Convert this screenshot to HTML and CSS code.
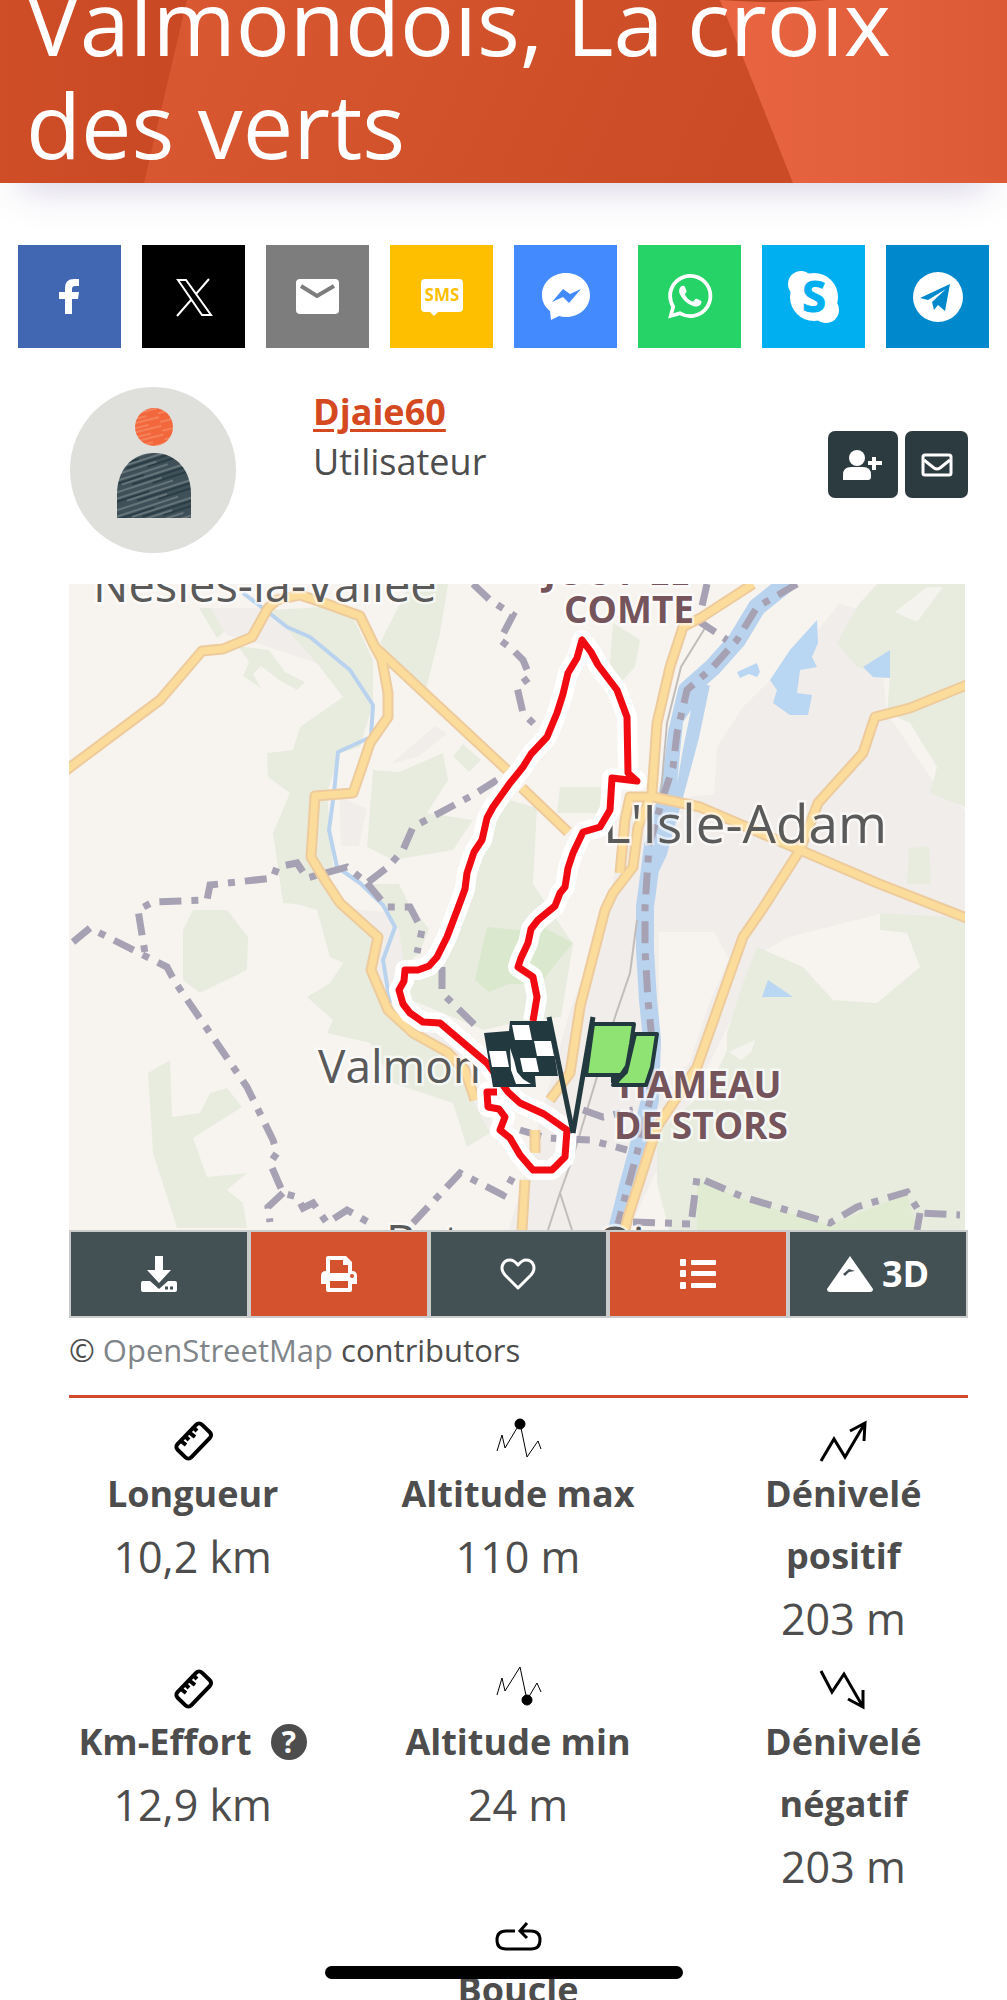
FILE: index.html
```html
<!DOCTYPE html>
<html lang="fr">
<head>
  <meta charset="UTF-8" />
  <meta name="viewport" content="width=device-width, initial-scale=1.0"/>
  <title>Valmondois, La croix des verts</title>
  <link rel="stylesheet" href="styles.css">
</head>
<body>

  <header class="hero">
    <svg class="hero-bg" viewBox="0 0 1007 213" preserveAspectRatio="none" aria-hidden="true">
      <defs>
        <linearGradient id="heroBase" x1="0" y1="0" x2="1" y2="0">
          <stop offset="0" stop-color="#cf4e28"/>
          <stop offset="0.16" stop-color="#c94924"/>
          <stop offset="1" stop-color="#cc4b25"/>
        </linearGradient>
        <linearGradient id="heroMid" x1="0" y1="0" x2="1" y2="0.15">
          <stop offset="0" stop-color="#da5932"/>
          <stop offset="1" stop-color="#ca4b25"/>
        </linearGradient>
        <linearGradient id="heroRight" x1="0" y1="0" x2="1" y2="0">
          <stop offset="0" stop-color="#ea6642"/>
          <stop offset="1" stop-color="#dd5a37"/>
        </linearGradient>
      </defs>
      <rect width="1007" height="213" fill="url(#heroBase)"/>
      <path d="M194 0L144 213H800L716 0Z" fill="url(#heroMid)"/>
      <path d="M708 0L793 213H1007V0Z" fill="url(#heroRight)"/>
      <path d="M640 20Q780 44 900 20Z" fill="#b9441f"/>
    </svg>
    <h1>Valmondois, La croix des verts</h1>
  </header>

  <nav class="share" aria-label="Partager">
    <a href="#" class="share-facebook" aria-label="Facebook">
      <svg viewBox="0 0 103 103"><path d="M47 69V54H41V47H47V43Q47 34 56 34H61V41H57Q54 41 54 44V47H61L60 54H54V69Z" fill="#fff"/></svg>
    </a>
    <a href="#" class="share-x" aria-label="X">
      <svg viewBox="0 0 103 103" fill="none" stroke="#fff" stroke-width="2"><path d="M36 35H44L69 70H60ZM67 34L54 49M49 55L35 71"/></svg>
    </a>
    <a href="#" class="share-mail" aria-label="E-mail">
      <svg viewBox="0 0 103 103"><rect x="30" y="34" width="43" height="35" rx="4" fill="#fff"/><path d="M35 41L51 51L68 41" fill="none" stroke="#7d7d7d" stroke-width="4"/></svg>
    </a>
    <a href="#" class="share-sms" aria-label="SMS">
      <svg viewBox="0 0 103 103"><path d="M35 34H69Q73 34 73 38V63Q73 67 69 67H48L44 71L40 67H35Q31 67 31 63V38Q31 34 35 34Z" fill="#fff"/><text x="52" y="56" class="sms-text">SMS</text></svg>
    </a>
    <a href="#" class="share-messenger" aria-label="Messenger">
      <svg viewBox="0 0 103 103"><path d="M52 28C38 28 28 38 28 50C28 57 31 62 36 66L37 75L45 71Q48 72 52 72C66 72 76 62 76 50C76 38 66 28 52 28Z" fill="#fff"/><path d="M38 57L49 44L56 49L67 44L55 58L49 52Z" fill="#448aff"/></svg>
    </a>
    <a href="#" class="share-whatsapp" aria-label="WhatsApp">
      <svg viewBox="0 0 103 103"><path transform="translate(30 29) scale(1.85)" fill="#fff" d="M17.472 14.382c-.297-.149-1.758-.867-2.03-.967-.273-.099-.471-.148-.67.15-.197.297-.767.966-.94 1.164-.173.199-.347.223-.644.075-.297-.15-1.255-.463-2.39-1.475-.883-.788-1.48-1.761-1.653-2.059-.173-.297-.018-.458.13-.606.134-.133.298-.347.446-.52.149-.174.198-.298.298-.497.099-.198.05-.371-.025-.52-.075-.149-.669-1.612-.916-2.207-.242-.579-.487-.5-.669-.51-.173-.008-.371-.01-.57-.01-.198 0-.52.074-.792.372-.272.297-1.04 1.016-1.04 2.479 0 1.462 1.065 2.875 1.213 3.074.149.198 2.096 3.2 5.077 4.487.709.306 1.262.489 1.694.625.712.227 1.36.195 1.871.118.571-.085 1.758-.719 2.006-1.413.248-.694.248-1.289.173-1.413-.074-.124-.272-.198-.57-.347m-5.421 7.403h-.004a9.87 9.87 0 01-5.031-1.378l-.361-.214-3.741.982.998-3.648-.235-.374a9.86 9.86 0 01-1.51-5.26c.001-5.45 4.436-9.884 9.888-9.884 2.64 0 5.122 1.03 6.988 2.898a9.825 9.825 0 012.893 6.994c-.003 5.45-4.437 9.884-9.885 9.884m8.413-18.297A11.815 11.815 0 0012.05 0C5.495 0 .16 5.335.157 11.892c0 2.096.547 4.142 1.588 5.945L.057 24l6.305-1.654a11.882 11.882 0 005.683 1.448h.005c6.554 0 11.89-5.335 11.893-11.893a11.821 11.821 0 00-3.48-8.413z"/></svg>
    </a>
    <a href="#" class="share-skype" aria-label="Skype">
      <svg viewBox="0 0 103 103"><g fill="#fff"><circle cx="52" cy="52" r="24"/><circle cx="39" cy="39" r="13"/><circle cx="64" cy="65" r="13"/></g><text x="52" y="67" class="skype-text">S</text></svg>
    </a>
    <a href="#" class="share-telegram" aria-label="Telegram">
      <svg viewBox="0 0 103 103"><circle cx="52" cy="52" r="25" fill="#fff"/><path d="M34 53L64 39L59 66L52 60L48 65L46 57L60 44L42 55Z" fill="#0088cc"/></svg>
    </a>
  </nav>

  <main>
    <section class="profile">
      <svg class="avatar" viewBox="0 0 167 167" role="img" aria-label="Avatar">
        <defs>
          <pattern id="hatchHead" width="40" height="9" patternUnits="userSpaceOnUse" patternTransform="rotate(-14)">
            <rect width="40" height="9" fill="#f2683c"/>
            <path d="M0 2H28M12 6H40" stroke="#f99a78" stroke-width="1"/>
          </pattern>
          <pattern id="hatchBody" width="90" height="17" patternUnits="userSpaceOnUse" patternTransform="rotate(-18)">
            <rect width="90" height="17" fill="#3f5058"/>
            <path d="M0 2H70M20 7H90M0 13H60" stroke="#8d999c" stroke-width="1"/>
            <path d="M30 10H90M0 5H44M50 15H90" stroke="#2a3c45" stroke-width="2"/>
          </pattern>
        </defs>
        <circle cx="84" cy="83" r="83" fill="#dfe0dc"/>
        <circle cx="85" cy="40" r="19" fill="url(#hatchHead)"/>
        <path d="M48 131V107C48 84 62 66 85 66C108 66 122 84 122 107V131Z" fill="url(#hatchBody)"/>
      </svg>
      <div class="profile-text">
        <a href="#" class="profile-name">Djaie60</a>
        <span>Utilisateur</span>
      </div>
      <div class="profile-actions">
        <button type="button" class="btn-follow" aria-label="Suivre">
          <svg width="40" height="34" viewBox="0 0 40 34" fill="#fff"><circle cx="14" cy="10" r="8"/><path d="M0 32V27Q0 19 8 19H20Q28 19 28 27V29Q28 32 25 32H3Q0 32 0 32Z"/><path d="M31 9V22M25 15H39" stroke="#fff" stroke-width="4"/></svg>
        </button>
        <button type="button" class="btn-message" aria-label="Envoyer un message">
          <svg width="32" height="24" viewBox="0 0 32 24" fill="none" stroke="#fff" stroke-width="3"><rect x="2" y="2" width="28" height="20" rx="2"/><path d="M3 7L13 15Q16 17 19 15L29 7"/></svg>
        </button>
      </div>
    </section>

    <svg class="map" viewBox="0 0 899 646" role="img" aria-label="Carte du parcours">
      <defs>
        <clipPath id="mapClip"><rect width="896" height="646"/></clipPath>
        <path id="roads" d="M-4 187L91 116L133 67L154 65L183 53L199 24L208 16L231 11L258 20L291 32L306 63L313 76L319 109V133L301 159L293 183L284 209L246 212L242 273L254 293L271 319L309 353L302 386L319 426L344 449L378 468L396 486L406 516M306 63L438 186M453 204L499 248M684 0L633 33L614 43L601 83L588 139L583 209L569 243L564 283L544 309L536 326L511 423L501 489L481 516M583 213L561 213L556 236L551 289M466 546V569M456 596L453 646M584 213L631 223L701 253L731 266L808 299L900 335M900 100L841 124L806 133L794 169L749 219L731 266L694 324L674 353L628 483L588 543L559 633L555 650"/>
        <path id="route" d="M464 437L468 413L464 393L449 383L452 374L459 359L462 345L469 336L486 322L491 309L496 303L499 284L504 269L514 248L531 243L541 226L543 194L568 197L559 189L558 133L548 106L529 81L522 68L513 56L508 74L499 89L494 110L488 129L478 153L462 170L454 183L441 199L424 223L418 234L413 256L405 268L398 289L396 305L389 324L378 353L368 373L360 382L349 386H336L335 397L330 406L334 420L341 429L354 438L371 439L391 456L418 479L439 508L451 519L475 530L498 546L496 573L483 586H464L451 571L441 554L431 546L436 533L430 525L419 523L418 508H428"/>
      </defs>
      <g clip-path="url(#mapClip)">
        <rect width="896" height="646" fill="#f7f4f0"/>

        <!-- towns -->
        <g fill="#f0edea">
          <path d="M648 163L674 123L741 56L770 20L808 30L818 129L868 203L896 226V334L811 330L720 353L690 370L660 440L600 560L560 646H440L500 430L540 320L556 230L600 215L645 210Z"/>
          <path d="M130 24H200L284 45L290 90L250 80L190 60L160 52Z"/>
          <path d="M258 140L268 170L258 206L228 190ZM270 212L298 225L290 262L272 262ZM322 180L366 142L378 150L350 172Z"/>
          <path d="M280 324L330 330L345 380L325 420L400 470L430 560L360 480L310 420Z"/>
        </g>
        <path d="M590 348H645L660 375L640 420L620 480L590 500Z" fill="#f7f4f0"/>

        <!-- woods -->
        <g fill="#e8ecdf">
          <path d="M201 26L254 23L284 33L304 76V119L291 163L271 169L258 209L264 283L244 289L274 324L214 319L204 249L221 209L199 193L198 169L224 166L231 143L274 113L251 83Z"/>
          <path d="M169 62L200 66L216 88L236 98L228 106L210 96L192 82L184 90L192 104L174 92L180 78Z"/>
          <path d="M130 24H142L155 48L148 54Z"/>
          <path d="M341 0H379L371 49L356 109L311 59Z"/>
          <path d="M304 186L330 188L374 169L379 196L358 229L404 236L384 266L324 276L298 263Z"/>
          <path d="M384 172L394 160L412 176L400 188Z"/>
          <path d="M441 216L468 224L464 300L484 330L504 360L492 433L440 440L415 446L340 415V392L372 380L395 330L405 290L425 240Z"/>
          <path d="M300 300L330 300L340 320L360 345L350 370L335 380L330 345Z"/>
          <path d="M114 346L124 326H158L179 353L178 386L131 409L114 396Z"/>
          <path d="M79 489L101 476L103 533L131 529L141 509L158 504L173 523L124 554L138 593L178 589L158 606L174 619L178 644H108L84 569Z"/>
          <path d="M214 316H264L304 356L298 389L321 429L378 469L421 549L398 563L384 519L324 499L301 459L258 449L264 436L238 413L261 399L274 379L261 373L248 326Z"/>
          <path d="M808 0H896V223L861 209L868 183L841 139L818 129L821 93L788 83L768 59L790 20Z"/>
          <path d="M688 363L734 383L764 416L808 419L851 383L838 349L811 346V329L896 334V646H600L588 599V549L641 503L658 466V449L674 399Z"/>
          <path d="M544 39L571 56L566 83L551 99L541 79Z"/>
          <path d="M491 203L538 203L528 229H488Z"/>
          <path d="M840 264L860 262L862 300L838 300Z"/>
        </g>
        <path d="M858 3H874L848 38L826 28Z" fill="#f5f3ee"/>
        <path d="M660 468L686 456L682 468L672 476Z" fill="#f5f3ee"/>
        <path d="M418 343L448 346L474 343L504 359L484 383L472 400H440L420 408L406 396Z" fill="#dae8ce"/>
        <path d="M628 596L674 615L761 641L838 610L848 646H628Z" fill="#e0ebd2"/>

        <!-- water -->
        <g fill="none" stroke="#b9d3ee" stroke-linejoin="round">
          <path d="M722 -4L688 23L668 56L644 83L618 106L608 149L604 183L598 213L584 262L576 323V366L579 416L583 456L581 516L568 569L558 606L547 650" stroke-width="18"/>
          <path d="M634 100L623 153L608 209L591 269L578 296" stroke-width="14"/>
          <path d="M174 9L199 28L218 43L241 53L281 86L304 121L302 153L269 168L265 209L260 246L268 283L291 299L314 321L326 343L314 376L321 419" stroke-width="4"/>
        </g>
        <path d="M614 138L622 126L614 165L608 200Z" fill="#f5f3ee"/>
        <g fill="#b9d6f2">
          <path d="M748 36L749 59L743 73L748 83L731 86L728 109L743 111L739 131H721L704 119L708 106L701 96L721 66Z"/>
          <path d="M668 88L688 79L691 88L688 93L680 90L671 94Z"/>
          <path d="M794 83L821 66V94L804 93Z"/>
          <path d="M699 396L724 413L693 413Z"/>
        </g>

        <!-- railways -->
        <path d="M636 44L612 83L598 139L592 209M568 336L561 389L546 433L521 516L504 573L491 609L479 646M491 609L503 646" class="rail"/>

        <!-- administrative boundaries -->
        <g class="boundary">
          <path d="M404 0L421 16L444 31L431 56L444 66L454 76L461 93L448 103L454 129L466 141"/>
          <path d="M428 196L404 211L344 243L334 266L319 283L298 299L278 283L238 294L228 279L208 283L204 294L141 301L138 316L84 318L69 326L76 369"/>
          <path d="M298 299L318 323L341 323L353 346L348 369M373 383V409L411 446"/>
          <path d="M4 358L21 344L74 371L98 383L106 398L178 503L204 556L208 569L201 579L214 609L228 613L234 624L244 619L258 639L278 626L304 641"/>
          <path d="M214 609L199 623L201 638"/>
          <path d="M344 639L391 589L434 611L446 589"/>
          <path d="M623 633L628 593L674 613L761 639L788 623L838 608L851 629L891 631M851 629L848 646"/>
          <path d="M564 638L621 640M451 546L478 554L521 556L558 566M514 526L534 533L564 526"/>
          <path d="M728 0L688 23L668 56L644 83L618 106L608 149L604 183L594 213L580 262L576 323V366L579 416L583 456L581 516L568 569L558 606L549 640"/>
          <path d="M628 36L658 56M638 0L633 22"/>
        </g>

        <use href="#roads" class="road-casing"/>
        <use href="#roads" class="road"/>

        <!-- place names -->
        <g class="place">
          <text x="24" y="18" font-size="47">Nesles-la-Vallée</text>
          <text x="534" y="259" font-size="53">L'Isle-Adam</text>
          <text x="249" y="499" font-size="46">Valmon</text>
          <text x="317" y="674" font-size="46">Butry</text>
          <text x="528" y="676" font-size="46">Oise</text>
        </g>
        <g class="hamlet">
          <text x="548" y="1">JOUY-LE</text>
          <text x="560" y="39">COMTE</text>
          <text x="631" y="514">HAMEAU</text>
          <text x="632" y="555">DE STORS</text>
        </g>

        <!-- hiking route -->
        <use href="#route" class="route-halo"/>
        <use href="#route" class="route"/>

        <!-- finish flag -->
        <path d="M480 433L504 549" stroke="#22393f" stroke-width="5"/>
        <path d="M415 449L440 447L441 437H480L489 492L466 492L467 503H424Z" fill="#22393f"/>
        <g fill="#fff">
          <path d="M443 441H460L463 456H446ZM465 457H482L485 472H468ZM451 474H467L470 488H454ZM420 467H437L440 483H423Z"/>
          <path d="M441 464L445 476L448 488L454 495L462 500H447L442 486Z"/>
        </g>
        <!-- start flag -->
        <path d="M524 433L504 549" stroke="#22393f" stroke-width="5"/>
        <path d="M566 450H588L583 483L577 501H544L557 488Z" fill="#8ee373" stroke="#22393f" stroke-width="4" stroke-linejoin="round"/>
        <path d="M556 488L549 500L542 499V492Z" fill="#22393f"/>
        <path d="M524 440H565L562 460L558 482L552 491H517Z" fill="#8ee373" stroke="#22393f" stroke-width="4" stroke-linejoin="round"/>
      </g>
    </svg>

    <div class="toolbar">
      <button type="button" aria-label="Télécharger">
        <svg width="36" height="36" viewBox="0 0 36 36" fill="#fff"><path d="M14 0H22V14H30L18 27L6 14H14Z"/><path d="M2 25H9L18 33L27 25H34Q36 25 36 27V34Q36 36 34 36H2Q0 36 0 34V27Q0 25 2 25Z"/><path d="M24 32H27M29 32H32" stroke="#435054" stroke-width="3"/></svg>
      </button>
      <button type="button" class="accent" aria-label="Imprimer">
        <svg width="36" height="36" viewBox="0 0 36 36"><path d="M7 0H25L31 6V15Q36 15 36 20V28H31V34Q31 36 29 36H7Q5 36 5 34V28H0V20Q0 15 5 15V2Q5 0 7 0Z" fill="#fff"/><path d="M9 4H22V9H27V17H9ZM9 25H27V32H9Z" fill="#d4522d"/><circle cx="31" cy="20" r="2" fill="#d4522d"/></svg>
      </button>
      <button type="button" aria-label="Favori">
        <svg width="36" height="34" viewBox="0 0 36 34" fill="none" stroke="#fff" stroke-width="3"><path d="M18 31L5 18C-1 11 3 3 10 3Q14 3 18 8Q22 3 26 3C33 3 37 11 31 18Z" stroke-linejoin="round"/></svg>
      </button>
      <button type="button" class="accent" aria-label="Liste">
        <svg width="36" height="32" viewBox="0 0 36 32" fill="#fff"><rect y="1" width="6" height="7" rx="1"/><rect y="12" width="6" height="7" rx="1"/><rect y="24" width="6" height="7" rx="1"/><rect x="11" y="2" width="25" height="5" rx="1"/><rect x="11" y="13" width="25" height="5" rx="1"/><rect x="11" y="25" width="25" height="5" rx="1"/></svg>
      </button>
      <button type="button">
        <svg width="46" height="36" viewBox="0 0 46 36"><path d="M23 0L46 33Q46 36 43 36H3Q0 36 0 33Z" fill="#fff"/><path d="M16 18L22 13L28 15L22 16L18 20Z" fill="#435054"/></svg>
        3D
      </button>
    </div>

    <p class="credit">© <a href="#">OpenStreetMap</a> contributors</p>
    <hr>
  </main>

  <section class="stats">
    <div class="stat">
      <svg width="48" height="48" viewBox="0 0 48 48" class="icon-bold"><rect x="7" y="17" width="35" height="19" rx="4" transform="rotate(-46 24 26)"/><path d="M12 26L17 30M17 22L20 25M21 18L26 22M25 13L28 16"/></svg>
      <h2>Longueur</h2>
      <p>10,2 km</p>
    </div>
    <div class="stat">
      <svg width="48" height="48" viewBox="0 0 48 48" class="icon-thin"><path d="M3 36L8 20L11 33L26 8L33 42L44 26L47 34"/><circle cx="26" cy="9" r="5"/></svg>
      <h2>Altitude max</h2>
      <p>110 m</p>
    </div>
    <div class="stat stat-narrow">
      <svg width="48" height="48" viewBox="0 0 48 48" class="icon-arrow"><path d="M2 46L15 24L26 42L46 8M31 16L46 8L45 26"/></svg>
      <h2>Dénivelé positif</h2>
      <p>203 m</p>
    </div>
    <div class="stat">
      <svg width="48" height="48" viewBox="0 0 48 48" class="icon-bold"><rect x="7" y="17" width="35" height="19" rx="4" transform="rotate(-46 24 26)"/><path d="M12 26L17 30M17 22L20 25M21 18L26 22M25 13L28 16"/></svg>
      <h2>Km-Effort <button type="button" class="help" aria-label="Aide">?</button></h2>
      <p>12,9 km</p>
    </div>
    <div class="stat">
      <svg width="48" height="48" viewBox="0 0 48 48" class="icon-thin"><path d="M3 32L8 15L11 28L26 4L33 37L43 20L47 29"/><circle cx="33" cy="37" r="5"/></svg>
      <h2>Altitude min</h2>
      <p>24 m</p>
    </div>
    <div class="stat stat-narrow">
      <svg width="48" height="48" viewBox="0 0 48 48" class="icon-arrow"><path d="M2 8L13 29L25 11L44 44M29 36L44 44V27"/></svg>
      <h2>Dénivelé négatif</h2>
      <p>203 m</p>
    </div>
    <div class="stat stat-loop">
      <svg width="48" height="48" viewBox="0 0 48 48" class="icon-arrow"><path d="M21 20H12Q3 20 3 29Q3 38 12 38H37Q46 38 46 29Q46 20 37 20H27M33 12L26 20L33 27"/></svg>
      <h2>Boucle</h2>
    </div>
  </section>

  <div class="home-indicator"></div>

</body>
</html>
```
FILE: styles.css
```css
* {
  box-sizing: border-box;
}

body {
  margin: 0;
  height: 100vh;
  overflow: hidden;
  background: #fff;
  color: #4d4d4d;
  font-family: "Open Sans", "Noto Sans", sans-serif;
  font-size: 36px;
  line-height: 50px;
}

svg {
  display: block;
}

button {
  font: inherit;
  border: none;
  padding: 0;
  color: #fff;
  cursor: pointer;
}

/* Header */
.hero {
  position: relative;
  margin-top: -30px;
  padding: 0 26px 7px;
  box-shadow: 0 26px 36px -20px rgba(90, 70, 140, 0.25);
}

.hero-bg {
  position: absolute;
  inset: 0;
  width: 100%;
  height: 100%;
}

.hero h1 {
  position: relative;
  margin: 0;
  color: #fff;
  font-size: 90px;
  font-weight: 400;
  line-height: 103px;
}

/* Share buttons */
.share {
  display: grid;
  grid-template-columns: repeat(8, 1fr);
  gap: 21px;
  padding: 62px 18px 0;
}

.share-facebook { background: #4267b2; }
.share-x { background: #000; }
.share-mail { background: #7d7d7d; }
.share-sms { background: #fdbf00; }
.share-messenger { background: #448aff; }
.share-whatsapp { background: #25d366; }
.share-skype { background: #00aff0; }
.share-telegram { background: #0088cc; }

.sms-text {
  fill: #fdbf00;
  font-size: 17px;
  font-weight: 700;
  text-anchor: middle;
}

.skype-text {
  fill: #00aff0;
  stroke: #00aff0;
  stroke-width: 1px;
  font-size: 43px;
  font-weight: 700;
  text-anchor: middle;
}

main {
  padding: 39px 39px 0 69px;
}

/* Profile */
.profile {
  display: flex;
  align-items: flex-start;
  margin-bottom: 30px;
}

.avatar {
  width: 167px;
  height: 167px;
}

.profile-text {
  flex: 1;
  display: flex;
  flex-direction: column;
  align-items: flex-start;
  margin-left: 77px;
}

.profile-name {
  color: #d4491f;
  font-weight: 700;
  text-decoration-thickness: 3px;
  text-underline-offset: 4px;
}

.profile-actions {
  display: flex;
  gap: 7px;
  margin-top: 44px;
}

.profile-actions button {
  display: flex;
  align-items: center;
  justify-content: center;
  height: 67px;
  background: #2c3b40;
  border-radius: 7px;
}

.profile-actions .btn-follow {
  width: 70px;
}

.profile-actions .btn-message {
  width: 63px;
}

/* Map */
.map {
  width: 100%;
}

.rail {
  fill: none;
  stroke: #c0bdbb;
  stroke-width: 2px;
}

.boundary {
  fill: none;
  stroke: #a6a2b4;
  stroke-width: 7px;
  stroke-dasharray: 22 10 7 10;
}

.road-casing,
.road,
.route-halo,
.route {
  fill: none;
  stroke-linejoin: round;
}

.road-casing {
  stroke: #edcb9c;
  stroke-width: 11px;
}

.road {
  stroke: #fbdc9a;
  stroke-width: 7px;
}

.route-halo {
  stroke: #fff;
  stroke-width: 20px;
}

.route {
  stroke: #f20a12;
  stroke-width: 7px;
}

.place,
.hamlet {
  paint-order: stroke;
  stroke: rgba(255, 255, 255, 0.6);
  stroke-width: 5px;
}

.place {
  fill: #5a5a5a;
}

.hamlet {
  fill: #75545b;
  font-size: 37px;
  font-weight: 700;
  text-anchor: middle;
}

/* Toolbar */
.toolbar {
  display: grid;
  grid-template-columns: repeat(5, 1fr);
}

.toolbar button {
  display: flex;
  align-items: center;
  justify-content: center;
  gap: 9px;
  height: 88px;
  border: 2px solid #c9ccca;
  background: #435054;
  font-weight: 700;
}

.toolbar .accent {
  background: #d4522d;
}

.credit {
  margin: 7px 0 20px;
  font-size: 31px;
}

.credit a {
  color: #808589;
  text-decoration: none;
}

hr {
  margin: 0;
  border: none;
  height: 3px;
  background: #d04a2c;
}

/* Stats */
.stats {
  display: grid;
  grid-template-columns: repeat(3, 1fr);
  padding: 3px 1px 0 30px;
  text-align: center;
  line-height: 62px;
}

.stat svg {
  margin: 14px auto 0;
  fill: none;
  stroke: #000;
}

.stat h2 {
  margin: 0;
  font-size: 36px;
  font-weight: 700;
}

.stat p {
  margin: 0;
  padding-top: 2px;
  font-size: 43px;
  line-height: 60px;
}

.stat-narrow {
  padding: 0 70px;
}

.stat-loop {
  grid-column: 2;
}

.icon-bold {
  stroke-width: 4px;
}

.icon-arrow {
  stroke-width: 3px;
}

.icon-thin {
  stroke-width: 1px;
}

.icon-thin circle {
  fill: #000;
}

.help {
  width: 36px;
  height: 36px;
  margin-left: 10px;
  border-radius: 50%;
  background: #4d4d4d;
  font-size: 30px;
  line-height: 36px;
  vertical-align: 2px;
}

.home-indicator {
  position: fixed;
  bottom: 21px;
  left: 50%;
  width: 358px;
  height: 13px;
  border-radius: 7px;
  background: #000;
  transform: translateX(-50%);
}
```
